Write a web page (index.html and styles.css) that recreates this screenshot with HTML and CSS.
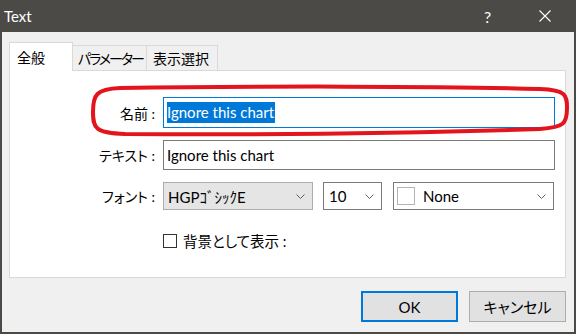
FILE: index.html
```html
<!DOCTYPE html>
<html>
<head>
    <title>Text</title>
    <meta charset="UTF-8">
    <link rel="stylesheet" href="styles.css">
</head>
<body>
  <div class="window">
    <div class="titlebar">
      <span class="title">Text</span>
      <span class="help">?</span>
      <span class="close">
        <svg width="12" height="12" viewBox="0 0 12 12"><path d="M0.5 0.5 L11.5 11.5 M11.5 0.5 L0.5 11.5" stroke="#fff" stroke-width="1.1" fill="none"/></svg>
      </span>
    </div>

    <div class="content">
      <div class="tabs">
        <div class="tab active">全般</div>
        <div class="tab tab-param">パラメーター</div>
        <div class="tab tab-view">表示選択</div>
      </div>

      <div class="panel">
        <div class="form">
          <div class="label">名前 :</div>
          <div class="field focus"><span class="selected">Ignore this chart</span></div>

          <div class="label">テキスト :</div>
          <div class="field">Ignore this chart</div>

          <div class="label">フォント :</div>
          <div class="font-row">
            <div class="combo combo-font">
              <span>HGPｺﾞｼｯｸE</span>
              <svg class="chevron" width="9" height="5" viewBox="0 0 9 5"><polyline points="0.5,0.5 4.5,4.5 8.5,0.5" stroke="#606060" fill="none"/></svg>
            </div>
            <div class="combo combo-size">
              <span>10</span>
              <svg class="chevron" width="9" height="5" viewBox="0 0 9 5"><polyline points="0.5,0.5 4.5,4.5 8.5,0.5" stroke="#606060" fill="none"/></svg>
            </div>
            <div class="combo combo-color">
              <span class="swatch"></span>
              <span>None</span>
              <svg class="chevron" width="9" height="5" viewBox="0 0 9 5"><polyline points="0.5,0.5 4.5,4.5 8.5,0.5" stroke="#606060" fill="none"/></svg>
            </div>
          </div>

          <div class="spacer"></div>
          <div class="check-row">
            <span class="checkbox"></span>
            <span>背景として表示 :</span>
          </div>
        </div>
      </div>

      <div class="buttons">
        <div class="button default">OK</div>
        <div class="button">キャンセル</div>
      </div>
    </div>

    <!-- red hand-drawn marker over the name field -->
    <svg class="marker" width="576" height="334" viewBox="0 0 576 334">
      <path d="M120 88 C250 86, 450 86, 540 89 C566 90, 567 95, 567 108 C567 124, 564 127, 540 129 C430 133, 300 135, 125 134 C95 133, 93 128, 93 112 C93 95, 96 89, 120 88 Z" stroke="#e3141e" stroke-width="4" fill="none"/>
    </svg>
  </div>
</body>
</html>
```

FILE: styles.css
```css
/* Basic Reset */
* {
    box-sizing: border-box;
    margin: 0;
    padding: 0;
}

body {
    font-family: 'Lato', 'Noto Sans CJK JP', sans-serif;
    font-feature-settings: "palt";
    font-size: 14px;
    color: #000;
    background: #fff;
}

/* Window frame */
.window {
    position: relative;
    width: 576px;
    height: 334px;
    background: #f0f0f0;
    border: 2px solid #4b4a47;
    border-top: 0;
}

.titlebar {
    height: 32px;
    margin: 0 -2px;
    background: #4b4a47;
    color: #fff;
    display: flex;
    align-items: center;
    font-size: 15px;
}

.title {
    padding-left: 4px;
    flex: 1;
}

.help {
    width: 14px;
    margin-right: 41px;
    font-size: 16px;
}

.close {
    display: flex;
    margin-right: 25px;
}

/* Content */
.content {
    padding: 10px 8px 0 7px;
}

.tabs {
    display: flex;
    align-items: flex-end;
    margin-bottom: -1px;
    position: relative;
    z-index: 1;
}

.tab {
    height: 25px;
    margin-bottom: 1px;
    padding: 0 5px;
    display: flex;
    align-items: center;
    background: #f0f0f0;
    border: 1px solid #d9d9d9;
    border-bottom: 0;
    border-left: 0;
    white-space: nowrap;
}

.tab.active {
    width: 64px;
    height: 29px;
    margin-bottom: 0;
    padding-left: 7px;
    background: #fff;
    border-left: 1px solid #d9d9d9;
}

.tab-param {
    width: 74px;
    letter-spacing: -2px;
}

.tab-view {
    width: 71px;
    padding-left: 6px;
}

.panel {
    height: 208px;
    background: #fff;
    border: 1px solid #d9d9d9;
    padding: 26px 10px 0 0;
}

/* Form grid */
.form {
    display: grid;
    grid-template-columns: 145px 1fr;
    column-gap: 8px;
    row-gap: 12px;
}

.label {
    display: flex;
    align-items: center;
    justify-content: flex-end;
}

.field {
    height: 30px;
    border: 1px solid #7a7a7a;
    padding: 0 3px;
    display: flex;
    align-items: center;
    font-size: 15px;
}

.field.focus {
    height: 31px;
    border-color: #0078d7;
}

.selected {
    background: #0078d7;
    color: #fff;
    line-height: 21px;
    padding-right: 1px;
}

.font-row {
    display: flex;
    height: 28px;
}

.combo {
    display: flex;
    align-items: center;
    border: 1px solid #7a7a7a;
    padding: 0 7px 0 4px;
    font-size: 15px;
}

.combo span {
    flex: 1;
}

.combo-font {
    width: 150px;
    background: #e5e5e5;
    border-color: #adadad;
}

.combo-size {
    width: 59px;
    margin-left: 10px;
    padding-left: 5px;
}

.combo-color {
    width: 161px;
    margin-left: 11px;
    padding-left: 3px;
}

.combo-color .swatch {
    flex: none;
    width: 18px;
    height: 18px;
    border: 1px solid #b4b4b4;
    margin-right: 8px;
}

.spacer {
    height: 14px;
}

.check-row {
    display: flex;
    align-items: center;
    gap: 6px;
    margin-top: 8px;
    font-size: 14.5px;
}

.checkbox {
    width: 14px;
    height: 14px;
    border: 1px solid #333;
    background: #fff;
}

/* Buttons */
.buttons {
    display: flex;
    justify-content: flex-end;
    gap: 11px;
    margin-top: 13px;
}

.button {
    width: 97px;
    height: 31px;
    display: flex;
    align-items: center;
    justify-content: center;
    background: #e1e1e1;
    border: 1px solid #adadad;
    font-size: 15px;
}

.button.default {
    border: 2px solid #0078d7;
}

/* Annotation overlay */
.marker {
    position: absolute;
    left: -2px;
    top: 0;
    pointer-events: none;
}
```
